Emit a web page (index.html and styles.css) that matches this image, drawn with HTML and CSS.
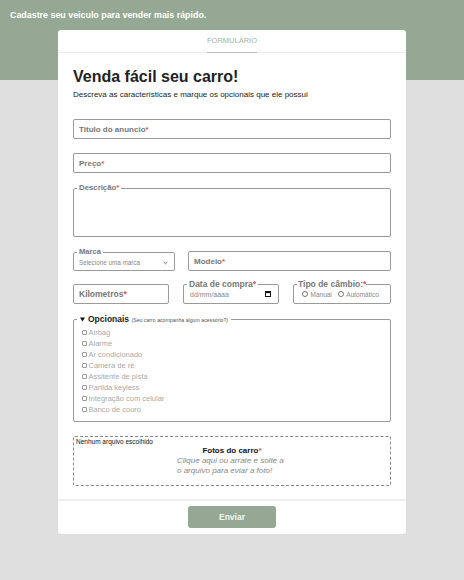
FILE: index.html
```html
<!DOCTYPE html>
<html lang="pt-BR">
<head>
<meta charset="utf-8">
<title>Cadastro de veículo</title>
<link rel="stylesheet" href="styles.css">
</head>
<body>
<header class="hero">Cadastre seu veiculo para vender mais rápido.</header>
<main class="card">
  <nav class="tabs"><span class="tab">FORMULÁRIO</span></nav>
  <section class="content">
    <h1 class="title">Venda fácil seu carro!</h1>
    <p class="subtitle">Descreva as características e marque os opcionais que ele possui</p>
    <form class="form">
      <div class="field">Titulo do anuncio<span class="req">*</span></div>
      <div class="field gap14">Preço<span class="req">*</span></div>
      <fieldset class="fs desc">
        <legend>Descrição<span class="req">*</span></legend>
        <div class="area"></div>
      </fieldset>
      <div class="row2">
        <fieldset class="fs marca">
          <legend>Marca</legend>
          <div class="select">Selecione uma marca
            <svg class="chev" width="5" height="4" viewBox="0 0 5 4"><polyline points="0.6,1 2.5,2.8 4.4,1" fill="none" stroke="#555" stroke-width="0.8"/></svg>
          </div>
        </fieldset>
        <div class="field">Modelo<span class="req">*</span></div>
      </div>
      <div class="row3">
        <div class="field km">Kilometros<span class="req">*</span></div>
        <fieldset class="fs data">
          <legend>Data de compra<span class="req">*</span></legend>
          <div class="date">dd/mm/aaaa
            <svg class="cal" width="6" height="6" viewBox="0 0 6 6"><rect x="0.5" y="0.5" width="5" height="5" fill="none" stroke="#111" stroke-width="1"/><rect x="0.5" y="0.5" width="5" height="1.6" fill="#111"/></svg>
          </div>
        </fieldset>
        <fieldset class="fs cambio">
          <legend>Tipo de câmbio:<span class="req">*</span></legend>
          <div class="radios">
            <span class="radio"><i class="dot"></i>Manual</span>
            <span class="radio"><i class="dot"></i>Automático</span>
          </div>
        </fieldset>
      </div>
      <fieldset class="fs opc">
        <legend><svg class="tri" width="5" height="5" viewBox="0 0 5 5"><polygon points="0,0.5 5,0.5 2.5,4.5" fill="#111"/></svg>Opcionais <small>(Seu carro acompanha algum acessorio?)</small></legend>
        <ul class="checks">
          <li><i class="box"></i>Airbag</li>
          <li><i class="box"></i>Alarme</li>
          <li><i class="box"></i>Ar condicionado</li>
          <li><i class="box"></i>Camera de ré</li>
          <li><i class="box"></i>Assitente de pista</li>
          <li><i class="box"></i>Partida keyless</li>
          <li><i class="box"></i>Integração com celular</li>
          <li><i class="box"></i>Banco de couro</li>
        </ul>
      </fieldset>
      <div class="upload">
        <div class="nofile">Nenhum arquivo escolhido</div>
        <div class="fotos">Fotos do carro<span class="req">*</span></div>
        <div class="hint">Clique aqui ou arrate e solte a o arquivo para eviar a foto!</div>
      </div>
    </form>
  </section>
  <footer class="actions"><button class="btn" type="button">Enviar</button></footer>
</main>
</body>
</html>
```
FILE: styles.css
```css
* { box-sizing: border-box; }
html, body { margin: 0; }
body {
  font-family: "Liberation Sans", Arial, sans-serif;
  background: #dedede linear-gradient(#94a893, #94a893) no-repeat 0 0 / 100% 80px;
  min-height: 580px;
}
.hero {
  color: #fff;
  font-weight: bold;
  font-size: 8.9px;
  line-height: 10px;
  padding: 10px 10px 0;
  height: 20px;
}
.card {
  width: 348px;
  margin: 10px auto 0;
  background: #fff;
  border-radius: 3px;
}
.tabs {
  height: 23px;
  border-bottom: 1px solid #ececec;
  display: flex;
  justify-content: center;
}
.tab {
  width: 50px;
  height: 23px;
  line-height: 22px;
  text-align: center;
  font-size: 7.5px;
  color: #9fb49d;
  border-bottom: 1px solid #bdbdbd;
  margin-bottom: -1px;
}
.content { padding: 14px 15px 13px; }
.title {
  margin: 0;
  font-size: 16px;
  line-height: 20px;
  color: #222;
}
.subtitle {
  margin: 3px 0 0;
  font-size: 8px;
  line-height: 10px;
  color: #222;
}
.form { margin-top: 19px; }
.req { color: #e05555; }
.field {
  height: 20px;
  border: 1px solid #9a9a9a;
  border-radius: 2px;
  padding-left: 5px;
  display: flex;
  align-items: center;
  font-size: 8px;
  font-weight: bold;
  color: #777;
}
.gap14 { margin-top: 14px; }
.fs {
  margin: 0;
  padding: 0 3px;
  border: 1px solid #9a9a9a;
  border-radius: 2px;
  min-width: 0;
}
.fs legend {
  padding: 0 2px;
  font-size: 7.8px;
  line-height: 10px;
  font-weight: bold;
  color: #777;
}
.desc { margin-top: 10px; }
.area { height: 43px; }
.row2 {
  margin-top: 10px;
  display: grid;
  grid-template-columns: 102px 1fr;
  column-gap: 13px;
  align-items: end;
}
.marca legend { font-size: 7.6px; }
.select {
  height: 13px;
  display: flex;
  align-items: center;
  justify-content: space-between;
  padding: 0 3px 2px 2px;
  font-size: 6.3px;
  color: #888;
}
.row3 {
  margin-top: 8px;
  display: grid;
  grid-template-columns: 96px 96px 1fr;
  column-gap: 14px;
  align-items: end;
}
.km { font-size: 8.5px; }
.data legend, .cambio legend { font-size: 8.5px; }
.date {
  height: 14px;
  display: flex;
  align-items: center;
  justify-content: space-between;
  padding: 0 4px 4px 3px;
  font-size: 7px;
  color: #888;
}
.cambio legend { padding: 0 0 0 1px; }
.radios {
  height: 14px;
  display: flex;
  align-items: center;
  padding: 0 0 4px 5px;
  font-size: 6.5px;
  color: #888;
  gap: 6px;
}
.radio { display: flex; align-items: center; gap: 2.5px; }
.dot {
  width: 6px;
  height: 6px;
  border: 1px solid #777;
  border-radius: 50%;
}
.opc { margin-top: 10px; }
.opc legend {
  font-size: 8.5px;
  color: #222;
  padding: 0 3px;
}
.tri { margin-right: 3px; vertical-align: 0; }
.opc small {
  font-size: 5.2px;
  font-weight: normal;
  color: #555;
}
.checks {
  list-style: none;
  margin: 2px 0 0 5px;
  padding: 0 0 6px;
}
.checks li {
  height: 11px;
  display: flex;
  align-items: center;
  font-size: 7.5px;
  color: #aaa;
}
.box {
  width: 5px;
  height: 5px;
  border: 1px solid #999;
  border-radius: 1px;
  margin-right: 1.5px;
}
.upload {
  margin-top: 14px;
  height: 50px;
  border: 1px dashed #858585;
  border-radius: 2px;
  padding: 1px 2px;
}
.nofile {
  font-size: 6.5px;
  line-height: 8px;
  color: #111;
}
.fotos {
  text-align: center;
  font-size: 8px;
  font-weight: bold;
  line-height: 9px;
  color: #111;
}
.hint {
  width: 110px;
  margin: 1px auto 0;
  font-size: 8px;
  line-height: 9.6px;
  font-style: italic;
  color: #888;
}
.actions {
  border-top: 2px solid #f0f0f0;
  padding: 5px 0 6px;
  display: flex;
  justify-content: center;
}
.btn {
  width: 88px;
  height: 22px;
  border: 0;
  border-radius: 3px;
  background: #94a893;
  color: #f1f6ef;
  font-family: inherit;
  font-weight: bold;
  font-size: 8.5px;
}
```
